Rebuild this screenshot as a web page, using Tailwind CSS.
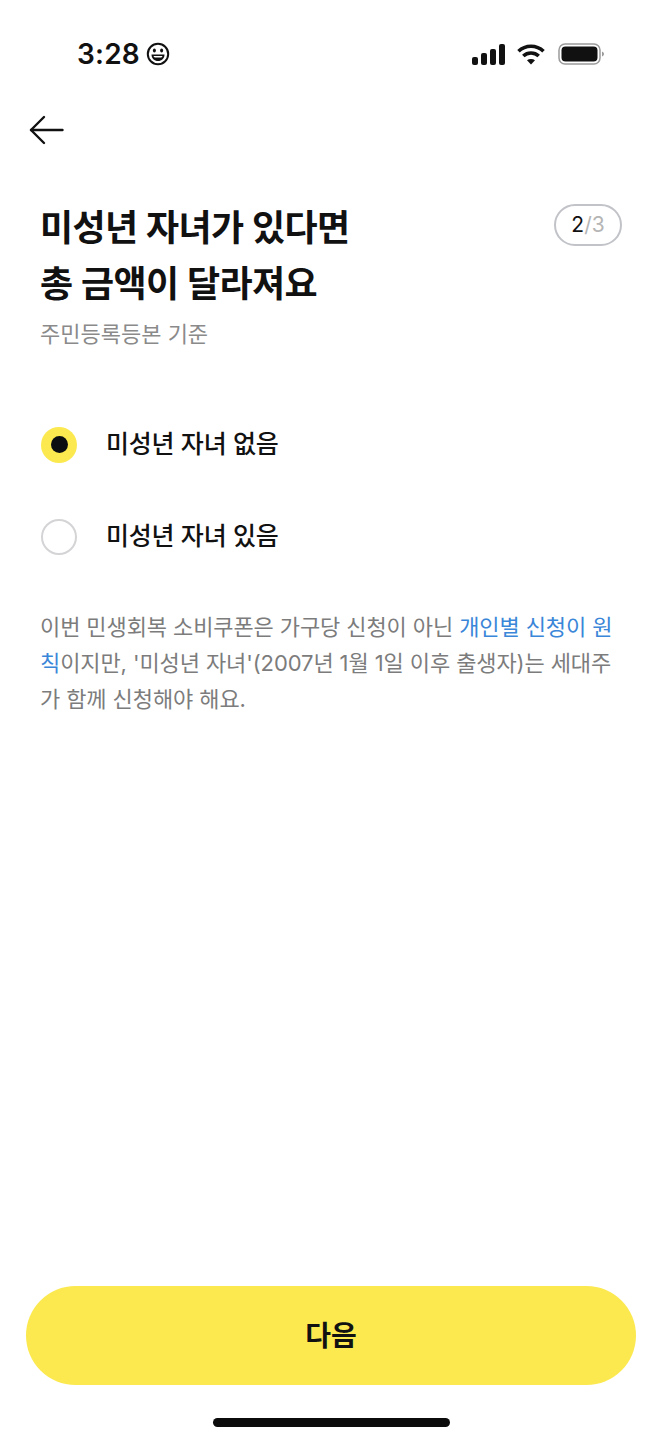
<!DOCTYPE html>
<html lang="ko">
<head>
    <meta charset="UTF-8">
    <meta name="viewport" content="width=device-width, initial-scale=1.0">
    <title>미성년 자녀</title>
    <script src="https://cdn.jsdelivr.net/npm/@tailwindcss/browser@4"></script>
</head>
<body class="bg-white text-[#111] font-['Inter','Noto_Sans_CJK_KR',sans-serif]">
    <div class="w-[662px] h-[1440px] flex flex-col overflow-hidden">
        <!-- status bar -->
        <div class="h-[108px] shrink-0 pl-[77px] pr-[58px] pt-[38px] flex items-start justify-between">
            <div class="flex items-center gap-[6px] h-[32px]">
                <span class="text-[28px] leading-[32px] font-semibold tracking-[0.2px]">3:28</span>
                <svg width="24" height="24" viewBox="0 0 24 24" fill="none">
                    <circle cx="12" cy="12" r="10.2" stroke="#111" stroke-width="2"/>
                    <ellipse cx="8.4" cy="8.6" rx="1.5" ry="2" fill="#111"/>
                    <ellipse cx="15.6" cy="8.6" rx="1.5" ry="2" fill="#111"/>
                    <path d="M5.5 12.5h13c0 4-2.800 6.500-6.500 6.500s-6.500-2.500-6.500-6.500z" fill="#111"/>
                    <path d="M7.500 14h9c-.3.800-.8 1.300-1.300 1.600H8.800c-.6-.3-1-.8-1.300-1.600z" fill="#fff"/>
                </svg>
            </div>
            <div class="flex items-center gap-[12px] h-[32px]">
                <svg width="33" height="21" viewBox="0 0 33 21" fill="#111">
                    <rect x="0" y="13" width="6" height="8" rx="2"/>
                    <rect x="9" y="9" width="6" height="12" rx="2"/>
                    <rect x="18" y="5" width="6" height="16" rx="2"/>
                    <rect x="27" y="0" width="6" height="21" rx="2"/>
                </svg>
                <svg width="28" height="21" viewBox="0 0 28 21" fill="none" stroke="#111" stroke-width="3.600">
                    <path d="M1.500 7.300C8.500 .6 19.500 .6 26.500 7.300"/>
                    <path d="M6.300 12c4.300-4 11.100-4 15.400 0"/>
                    <path d="M14 20.500l-4-4.200c2.300-1.700 5.700-1.700 8 0z" fill="#111" stroke="none"/>
                </svg>
                <svg width="46" height="22" viewBox="0 0 46 22" fill="none" class="ml-[1px]">
                    <rect x="1" y="1" width="41" height="20" rx="6" stroke="#9b9b9b" stroke-width="1.500"/>
                    <rect x="3.500" y="3.500" width="36" height="15" rx="4" fill="#111"/>
                    <path d="M44 8.500c1.200.4 2 1.300 2 2.500s-.8 2.100-2 2.500z" fill="#9b9b9b"/>
                </svg>
            </div>
        </div>

        <!-- back -->
        <div class="h-[44px] shrink-0 pl-[29px] flex items-center">
            <svg width="35" height="30" viewBox="0 0 35 30" fill="none" stroke="#111" stroke-width="2.400" stroke-linecap="round" stroke-linejoin="round">
                <path d="M33.500 15H2"/>
                <path d="M15 2L2 15l13 13"/>
            </svg>
        </div>

        <!-- heading -->
        <div class="pl-[40px] pr-[40px] pt-[48px] flex items-start justify-between">
            <div>
                <h1 class="text-[36px] leading-[56px] font-semibold tracking-[-0.6px]">미성년 자녀가 있다면<br>총 금액이 달라져요</h1>
                <p class="mt-[6px] text-[22px] leading-[32px] text-[#8a8a8a]">주민등록등본 기준</p>
            </div>
            <div class="mt-[4px] w-[68px] h-[42px] rounded-full border-2 border-[#c2c3c8] flex items-center justify-center text-[21px]">
                <span>2</span><span class="text-[#b5b5b5]">/3</span>
            </div>
        </div>

        <!-- options -->
        <div class="mt-[76px] pl-[41px] flex flex-col gap-[55px]">
            <div class="flex items-center gap-[29px] h-[37px]">
                <span class="size-[36px] rounded-full bg-[#fbe94f] flex items-center justify-center">
                    <span class="size-[17px] rounded-full bg-[#0b0d10]"></span>
                </span>
                <span class="text-[25px] font-medium tracking-[-0.2px]">미성년 자녀 없음</span>
            </div>
            <div class="flex items-center gap-[29px] h-[37px]">
                <span class="size-[36px] rounded-full border-2 border-[#d4d4d6]"></span>
                <span class="text-[25px] font-medium tracking-[-0.2px]">미성년 자녀 있음</span>
            </div>
        </div>

        <!-- note -->
        <p class="mt-[54px] px-[40px] text-[22px] leading-[36px] text-[#7c7c7c] tracking-[-0.1px]">이번 민생회복 소비쿠폰은 가구당 신청이 아닌 <span class="text-[#3a86d8]">개인별 신청이 원칙</span>이지만, '미성년 자녀'(2007년 1월 1일 이후 출생자)는 세대주가 함께 신청해야 해요.</p>

        <!-- bottom -->
        <div class="mt-auto px-[26px] pb-[13px] flex flex-col items-center">
            <button class="w-full h-[99px] rounded-full bg-[#fbe94f] text-[28px] font-semibold">다음</button>
            <div class="mt-[33px] w-[237px] h-[9px] rounded-full bg-[#0b0b0b]"></div>
        </div>
    </div>
</body>
</html>
